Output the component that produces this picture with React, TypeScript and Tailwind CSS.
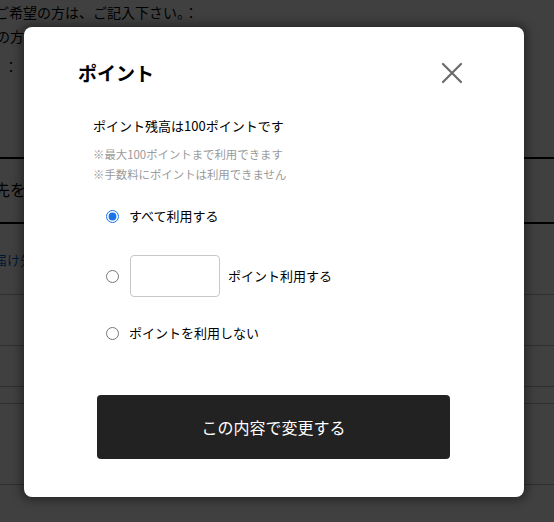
import { useState } from 'react';

export default function App() {
  const [mode, setMode] = useState<'all' | 'part' | 'none'>('all');
  const [amount, setAmount] = useState('');

  return (
    <div className="relative h-[522px] w-[554px] overflow-hidden bg-white font-['Noto_Sans_CJK_JP',sans-serif] text-black">
      {/* Page behind the modal */}
      <div className="text-[14px] leading-none">
        <p className="ml-[-5px] pt-[5px]">ご希望の方は、ご記入下さい。：</p>
        <p className="ml-[-4px] mt-[10px]">の方は、ご記入下さい。</p>
        <p className="mt-[16px] pl-[4px]">：</p>
        <div className="mt-[84px] border-t-2 border-black" />
        <p className="ml-[-6px] mt-[22px] text-[16px]">先を追加する</p>
        <div className="mt-[25px] border-t-2 border-black" />
        <p className="ml-[-6px] mt-[29px] text-[13px] text-[#0066cc]">届け先を変更</p>
        <div className="mt-[28px] border-t border-[#bbb]" />
        <div className="mt-[50px] border-t border-[#bbb]" />
        <div className="mt-[40px] border-t border-[#bbb]" />
        <div className="mt-[16px] border-t border-[#bbb]" />
        <div className="mt-[80px] border-t border-[#bbb]" />
      </div>

      {/* Overlay */}
      <div className="absolute inset-0 bg-black/75">
        <div className="absolute left-[24px] top-[27px] h-[470px] w-[500px] rounded-[8px] bg-white shadow-[0_0_8px_4px_rgba(0,0,0,0.35)]">
          <div className="flex items-center justify-between pl-[54px] pr-[60px] pt-[31px]">
            <h2 className="text-[19px] font-bold leading-[30px]">ポイント</h2>
            <button aria-label="閉じる" className="flex h-[24px] w-[24px] items-center justify-center">
              <svg width="22" height="22" viewBox="0 0 22 22" fill="none" stroke="#6b6b6b" strokeWidth="2.2" strokeLinecap="round">
                <path d="M2 2L20 20M20 2L2 20" />
              </svg>
            </button>
          </div>

          <div className="pl-[69px] pt-[28px]">
            <p className="text-[13px] leading-[20px]">ポイント残高は100ポイントです</p>
            <p className="mt-[8px] text-[11.4px] leading-[20px] text-[#9a9a9a]">※最大100ポイントまで利用できます</p>
            <p className="text-[11.4px] leading-[20px] text-[#9a9a9a]">※手数料にポイントは利用できません</p>
          </div>

          <div className="flex flex-col pl-[82px] pt-[12px]">
            <label className="flex h-[40px] items-center gap-[10px] text-[13px]">
              <input
                type="radio"
                name="point"
                checked={mode === 'all'}
                onChange={() => setMode('all')}
                className="h-[13px] w-[13px] accent-[#1a73e8]"
              />
              すべて利用する
            </label>
            <label className="mt-[19px] flex h-[42px] items-center text-[13px]">
              <input
                type="radio"
                name="point"
                checked={mode === 'part'}
                onChange={() => setMode('part')}
                className="h-[13px] w-[13px]"
              />
              <input
                type="text"
                value={amount}
                onChange={(e) => setAmount(e.target.value)}
                className="ml-[11px] h-[42px] w-[90px] rounded-[4px] border border-[#c8c8c8] px-2"
              />
              <span className="ml-[8px]">ポイント利用する</span>
            </label>
            <label className="mt-[16px] flex h-[40px] items-center gap-[10px] text-[13px]">
              <input
                type="radio"
                name="point"
                checked={mode === 'none'}
                onChange={() => setMode('none')}
                className="h-[13px] w-[13px]"
              />
              ポイントを利用しない
            </label>
          </div>

          <div className="pl-[73px] pt-[42px]">
            <button className="h-[64px] w-[353px] rounded-[4px] bg-[#222] text-[16px] text-white">
              この内容で変更する
            </button>
          </div>
        </div>
      </div>
    </div>
  );
}
